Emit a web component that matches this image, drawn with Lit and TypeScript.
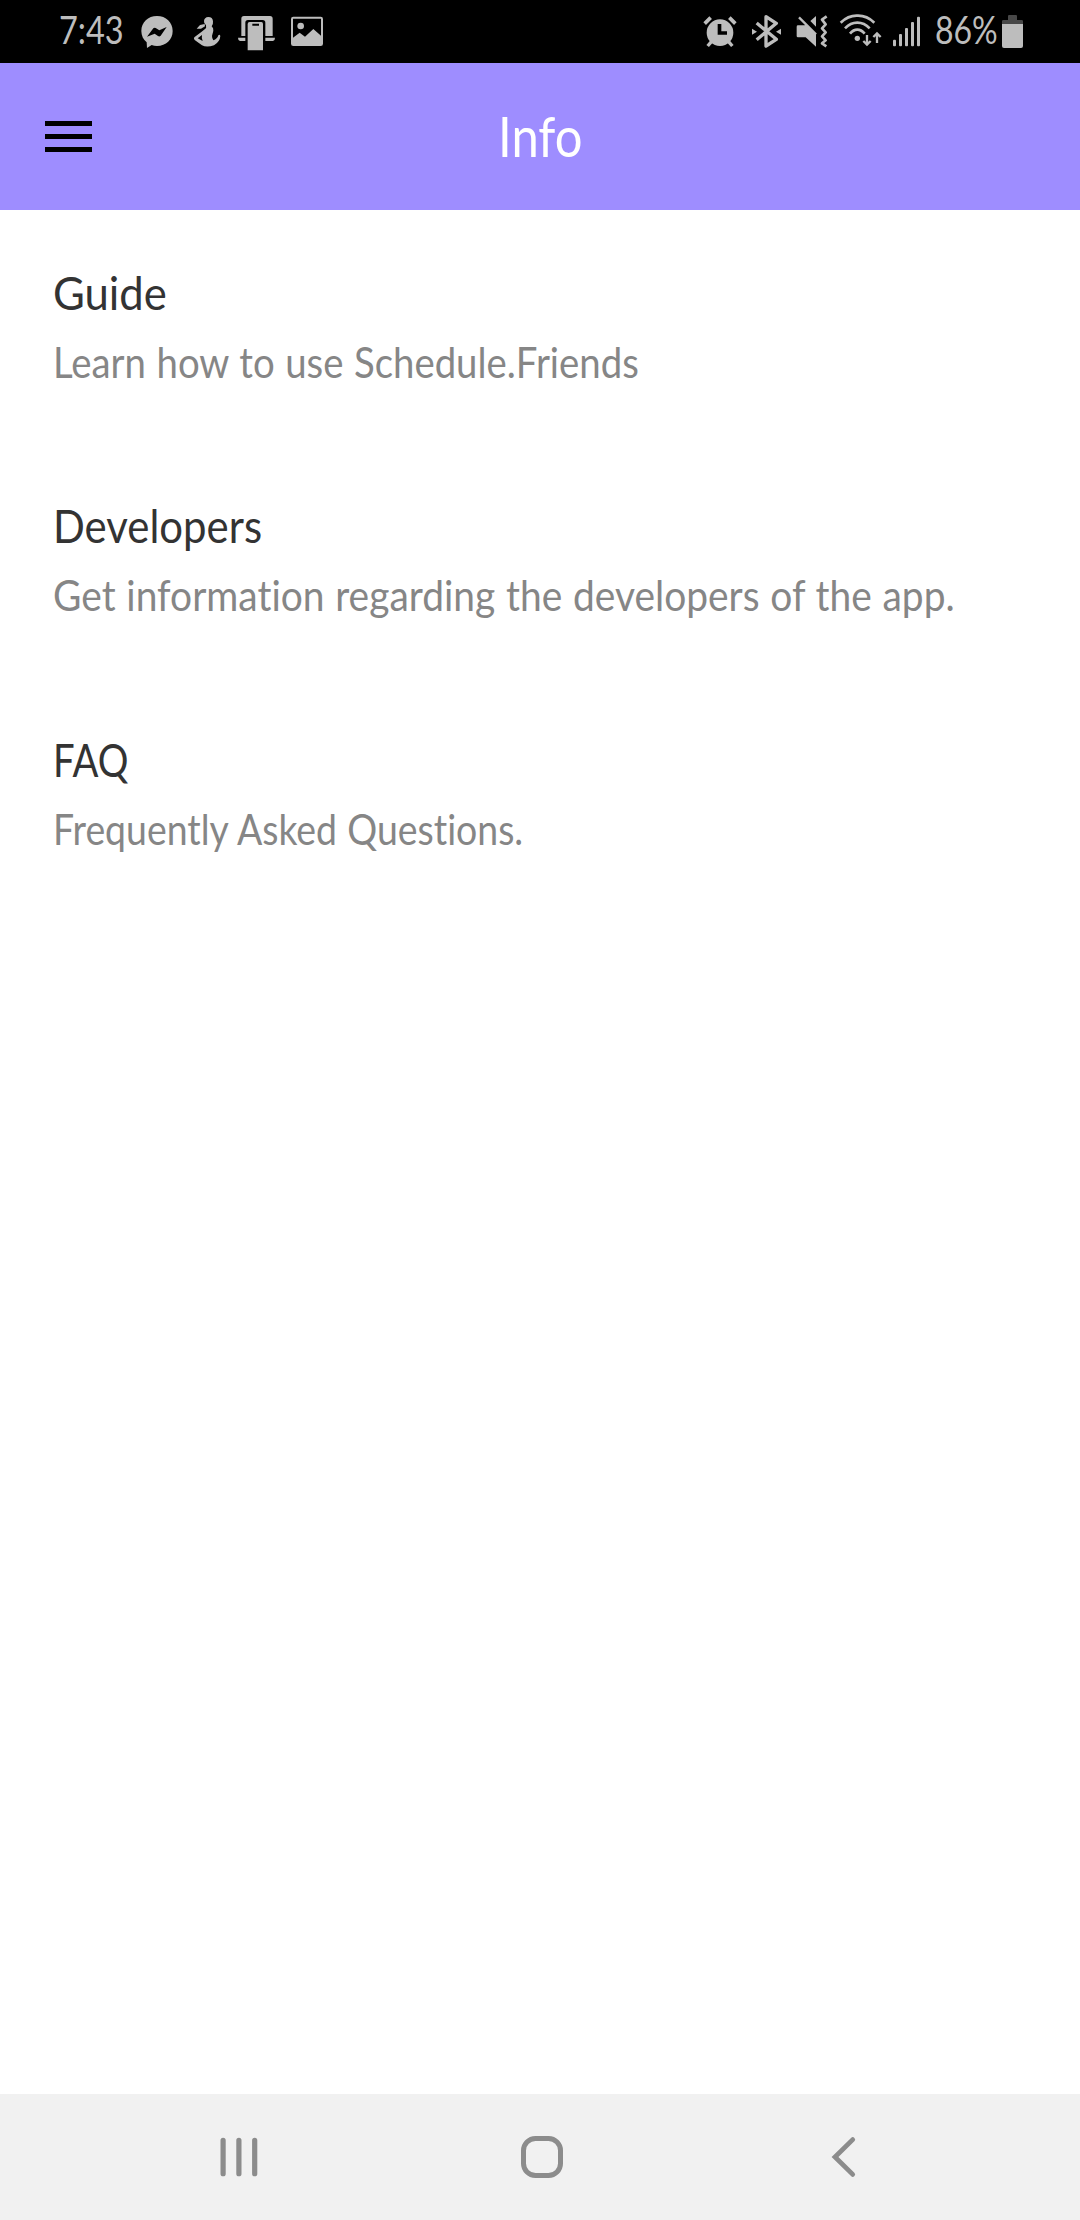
import { LitElement, html, css, svg } from "lit";
import type { SVGTemplateResult } from "lit";
import { customElement, property } from "lit/decorators.js";
import { styleMap } from "lit/directives/style-map.js";

interface Icon {
  x: number;
  w: number;
  gap: number;
  body: SVGTemplateResult;
}

interface Entry {
  title: string;
  titleScale: number;
  text: string;
  textScale: number;
}

// Icons are drawn on a grid of three units per pixel, 189 units tall.
const messenger: Icon = {
  x: 300, w: 102, gap: 15,
  body: svg`<path fill-rule="evenodd" d="M351 48C324 48 304 67 304 93C304 107 310 119 320 127L321 144L335 135C340 137 345 138 351 138C378 138 398 119 398 93C398 67 378 48 351 48ZM321 110L340 85Q343 82 347 84L358 91L380 81L362 107Q358 111 354 108L344 101Z"/>`,
};
const figure: Icon = {
  x: 456, w: 90, gap: 18,
  body: svg`<path d="M505 51Q518 51 519 64Q520 75 515 79Q521 84 520 92L516 108Q516 116 520 121Q532 117 535 106Q539 102 541 108Q540 125 522 136Q500 143 486 136L464 120Q460 116 463 112L485 95L495 87Q500 84 498 76Q491 71 492 63Q493 52 505 51Z"/>
    <path d="M494 72L480 75L470 86L483 86L495 79Z"/>
    <path fill="#000" d="M473 115L486 105Q484 113 488 123Z"/>`,
};
const foldable: Icon = {
  x: 591, w: 117, gap: 15,
  body: svg`<path d="M612 48H690Q698 48 698 56V108H676V68Q676 60 668 60H624Q616 60 616 68V108H604V56Q604 48 612 48Z"/>
    <path d="M594 113H616V123H600Q594 122 594 113ZM676 113H705Q705 122 699 123H676Z"/>
    <path fill-rule="evenodd" d="M629 66H664Q669 66 669 72V151H623V72Q623 66 629 66ZM637 71V77H657V71Z"/>`,
};
const picture: Icon = {
  x: 750, w: 102, gap: 14,
  body: svg`<path fill-rule="evenodd" d="M760 50H842Q849 50 849 57V131Q849 138 842 138H760Q753 138 753 131V57Q753 50 760 50ZM759 56V113L779 98L795 110L820 87L843 107V56Z"/><circle cx="782" cy="78" r="10"/>`,
};
const alarm: Icon = {
  x: 33, w: 108, gap: 0,
  body: svg`<path fill-rule="evenodd" d="M87 58A40 40 0 1 0 87 138A40 40 0 1 0 87 58ZM80 72H91V94H108V104H80Z"/>
    <path class="line" stroke-width="11" d="M41 71L59 53M115 53L133 71"/>
    <path class="line" stroke-width="10" d="M62 124L50 138M112 124L124 138"/>`,
};
const bluetooth: Icon = {
  x: 180, w: 93, gap: 13,
  body: svg`<path class="line" stroke-width="10" stroke-linejoin="round" d="M197 69L256 118L225 138V50L256 70L197 119"/>
    <path d="M183 86L198 95L183 104ZM270 86L255 95L270 104Z"/>`,
};
const mute: Icon = {
  x: 315, w: 96, gap: 14,
  body: svg`<path d="M321 76H341L345 73L375 103V140L344 112H321Q317 112 317 108V80Q317 76 321 76ZM358 63L375 48V80Z"/>
    <path class="line" stroke-width="7" d="M324 52L375 103"/>
    <path class="line" stroke-width="8" stroke-linejoin="round" d="M407 49L393 59L404 73L393 85L404 97L393 109L404 121L393 130L406 139"/>`,
};
const wifi: Icon = {
  x: 444, w: 129, gap: 11,
  body: svg`<path class="line" stroke-width="8" d="M449 68Q472 46 499 47Q527 46 550 68M462 85Q478 68 499 68Q520 68 536 85M477 101Q487 89 499 89Q511 89 521 101"/>
    <circle cx="499" cy="115" r="8"/>
    <path class="line" stroke-width="7" d="M528 105V134M517 123L528 134L539 123M558 129V100M547 111L558 100L569 111"/>`,
};
const signal: Icon = {
  x: 93, w: 87, gap: 10,
  body: svg`<rect x="96" y="119" width="9" height="20" rx="3"/><rect x="114" y="102" width="9" height="37" rx="3"/>
    <rect x="132" y="84" width="9" height="55" rx="3"/><rect x="150" y="66" width="9" height="73" rx="3"/>
    <rect x="168" y="50" width="9" height="89" rx="3"/>`,
};
const battery: Icon = {
  x: 420, w: 69, gap: 4,
  body: svg`<path class="dim" d="M444 45H465Q468 45 468 49V60H482Q486 60 486 64V72H423V64Q423 60 427 60H441V49Q441 45 444 45Z"/>
    <path d="M423 72H486V138Q486 144 480 144H429Q423 144 423 138Z"/>`,
};

@customElement("fit-text")
export class FitText extends LitElement {
  @property({ type: Number }) scale = 1;

  static styles = css`
    :host { display: block; white-space: nowrap; }
    .run { display: inline-block; transform-origin: var(--fit-origin, left) center; }
  `;

  render() {
    return html`<span class="run" style=${styleMap({ transform: `scaleX(${this.scale})` })}><slot></slot></span>`;
  }
}

@customElement("app-root")
export class AppRoot extends LitElement {
  private entries: Entry[] = [
    { title: "Guide", titleScale: 0.929, text: "Learn how to use Schedule.Friends", textScale: 0.922 },
    { title: "Developers", titleScale: 0.892, text: "Get information regarding the developers of the app.", textScale: 0.936 },
    { title: "FAQ", titleScale: 0.815, text: "Frequently Asked Questions.", textScale: 0.899 },
  ];

  static styles = css`
    :host {
      display: flex;
      flex-direction: column;
      width: 1080px;
      height: 2220px;
      background: #fff;
      font-family: Lato, "Liberation Sans", sans-serif;
      font-variant-ligatures: none;
    }
    svg { display: block; flex: none; }
    .status {
      flex: none;
      display: flex;
      justify-content: space-between;
      height: 63px;
      padding: 0 56px 0 59px;
      background: #000;
      color: #bdbdbd;
      font-size: 38px;
      line-height: 59px;
    }
    .group { display: flex; align-items: flex-start; }
    .status svg { height: 63px; fill: #bdbdbd; }
    .line { fill: none; stroke: #bdbdbd; }
    .dim { fill: #484848; }
    .time { width: 66px; }
    .percent { width: 62.5px; margin-left: 13.5px; }
    .header {
      flex: none;
      display: grid;
      grid-template-columns: 1fr auto 1fr;
      align-items: center;
      height: 147px;
      padding: 0 45px;
      box-sizing: border-box;
      background: #9e8dff;
    }
    .heading {
      --fit-origin: center;
      padding-bottom: 2px;
      color: #fff;
      font-size: 56px;
      line-height: 70px;
    }
    .list {
      flex: 1;
      display: flex;
      flex-direction: column;
      gap: 108.4px;
      padding: 52px 53px 0;
    }
    .entry { display: flex; flex-direction: column; gap: 15px; }
    .title { color: #333; font-size: 47px; line-height: 60px; }
    .text { color: #868686; font-size: 41.6px; line-height: 50px; word-spacing: 0.8px; }
    .nav {
      flex: none;
      display: flex;
      align-items: center;
      height: 126px;
      padding-left: 219px;
      box-sizing: border-box;
      background: #f1f1f1;
      fill: none;
      stroke: #8c8c8c;
      stroke-linecap: round;
    }
    .home { margin-left: 260px; }
    .back { margin-left: 268px; }
  `;

  private icon(i: Icon) {
    return html`<svg width=${i.w / 3} height="63" viewBox="${i.x} 0 ${i.w} 189" style=${styleMap({ marginLeft: `${i.gap}px` })}>${i.body}</svg>`;
  }

  render() {
    return html`
      <div class="status">
        <div class="group">
          <fit-text class="time" .scale=${0.856}>7:43</fit-text>
          ${[messenger, figure, foldable, picture].map((i) => this.icon(i))}
        </div>
        <div class="group">
          ${[alarm, bluetooth, mute, wifi, signal].map((i) => this.icon(i))}
          <fit-text class="percent" .scale=${0.842}>86%</fit-text>
          ${this.icon(battery)}
        </div>
      </div>
      <header class="header">
        <svg width="48" height="34" viewBox="0 0 48 34">
          <path d="M0 1H47V6H0ZM0 14H47V19H0ZM0 27H47V32H0Z"/>
        </svg>
        <fit-text class="heading" .scale=${0.874}>Info</fit-text>
      </header>
      <main class="list">
        ${this.entries.map((e) => html`
          <section class="entry">
            <fit-text class="title" .scale=${e.titleScale}>${e.title}</fit-text>
            <fit-text class="text" .scale=${e.textScale}>${e.text}</fit-text>
          </section>`)}
      </main>
      <nav class="nav">
        <svg width="40" height="42" viewBox="0 0 40 42"><path stroke-width="5.2" d="M4.1 4.3V37.7M19.9 4.3V37.7M35.7 4.3V37.7"/></svg>
        <svg class="home" width="44" height="44" viewBox="0 0 44 44"><rect x="4.5" y="3.5" width="37" height="37" rx="12" stroke-width="5"/></svg>
        <svg class="back" width="26" height="42" viewBox="0 0 26 42"><path stroke-width="4.8" d="M21.7 3.6L4 21L21.7 38.4"/></svg>
      </nav>
    `;
  }
}
